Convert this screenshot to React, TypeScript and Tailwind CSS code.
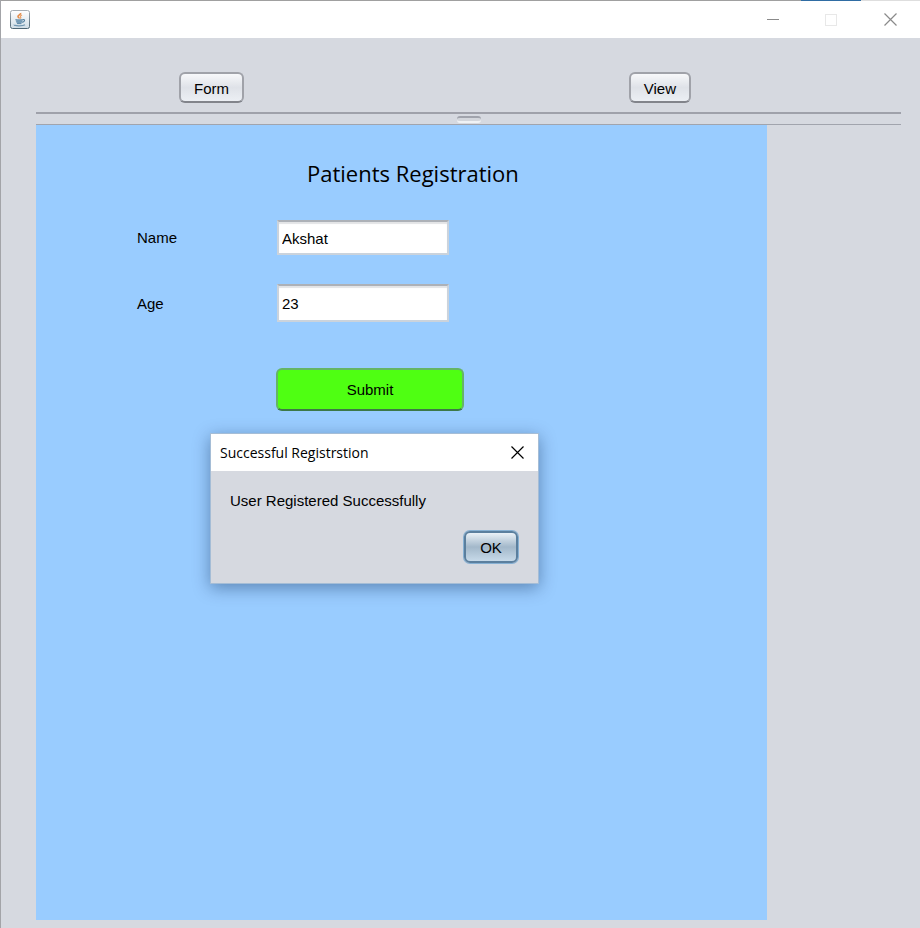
import { useState } from "react";

function JavaIcon() {
  return (
    <svg width="20" height="20" viewBox="0 0 20 20" aria-hidden="true">
      <defs>
        <linearGradient id="tile" x1="0" y1="0" x2="0" y2="1">
          <stop offset="0" stopColor="#ffffff" />
          <stop offset="1" stopColor="#cfdde6" />
        </linearGradient>
        <linearGradient id="edge" x1="0" y1="0" x2="0" y2="1">
          <stop offset="0" stopColor="#a5adb3" />
          <stop offset="1" stopColor="#4d6675" />
        </linearGradient>
      </defs>
      <rect x="0.5" y="0.5" width="19" height="18" rx="2" fill="url(#tile)" stroke="url(#edge)" />
      <path d="M10.6 3c.7 1.6-3.1 2.1-2.6 3.7.2.7 1.2 1 1.3 1.8" fill="none" stroke="#e58a45" strokeWidth="1.6" />
      <path d="M12 5c-1.7.7-2 1.3-1.3 2.1.4.5 0 1-.5 1.4" fill="none" stroke="#e9a068" strokeWidth="1.2" />
      <path d="M5.6 9.4h7.2c0 2.2-1 3.8-1.9 4.2H7.4c-.9-.4-1.8-2-1.8-4.2z" fill="#8fb0c8" />
      <path d="M5.5 9.6c1.8.6 5.4.6 7.2 0M6.6 11.7c1.4.5 3.9.5 5.1 0M7 13.6h4.4" fill="none" stroke="#54809f" strokeWidth="0.9" />
      <path d="M12.8 9.6c2.6-.4 2.2 2-.6 2.8" fill="none" stroke="#54809f" strokeWidth="1.1" />
      <path d="M4.4 14.7c-1.2 1.3 8.6 1.6 10.6.1" fill="none" stroke="#6f96b1" strokeWidth="1.3" />
    </svg>
  );
}

function Cross() {
  return (
    <svg width="13" height="13" viewBox="0 0 13 13" aria-hidden="true">
      <path d="M.5.5l12 12M12.5.5l-12 12" stroke="currentColor" strokeWidth="1.2" fill="none" />
    </svg>
  );
}

function ToolButton({ children }: { children: string }) {
  return (
    <button
      type="button"
      className="h-[31px] rounded-md border-2 border-[#a0a2a9] border-b-[#82848b] bg-linear-to-b from-[#f7f8fa] via-[#dfe2e8] to-[#eceff4] px-[13px] pt-0.5 leading-4"
    >
      {children}
    </button>
  );
}

const fieldStyle =
  "w-[172px] border-2 border-[#cbd3dc] border-t-[#adb1b7] bg-white px-[3px] shadow-[inset_0_2px_1px_#e3e4e6] outline-none";

export default function App() {
  const [name, setName] = useState("Akshat");
  const [age, setAge] = useState("23");

  return (
    <div className="flex min-h-screen flex-col border-l border-[#a3a4a8] bg-[#d6d9e0] font-['Liberation_Sans',Arial,sans-serif] text-[15px] text-black">
      <div className="flex h-px bg-[#a0a0a0]">
        <div className="ml-auto w-[60px] bg-[#2f6ca3]" />
        <div className="w-[59px] bg-[#dedede]" />
      </div>
      <header className="flex h-[37px] items-center justify-between bg-white pl-[9px] text-[#8a8a8a]">
        <JavaIcon />
        <div className="flex h-full">
          <button type="button" aria-label="Minimize" className="grid w-[58px] place-items-center">
            <span className="h-px w-3 bg-current" />
          </button>
          <button type="button" aria-label="Maximize" disabled className="grid w-[58px] place-items-center">
            <span className="size-3 border border-[#e8e8e8]" />
          </button>
          <button type="button" aria-label="Close" className="grid w-[60px] place-items-center">
            <Cross />
          </button>
        </div>
      </header>

      <main className="flex flex-1 flex-col pt-[34px] pr-[19px] pb-2 pl-[35px]">
        <nav className="flex justify-between pr-[210px] pb-[9px] pl-[143px]">
          <ToolButton>Form</ToolButton>
          <ToolButton>View</ToolButton>
        </nav>

        <div className="flex h-[13px] justify-center border-t-2 border-b border-t-[#9fa1aa] border-b-[#a1a4ad] pt-[2px]">
          <div className="h-[7px] w-6 rounded-[3px] border-t-2 border-b-2 border-t-[#a0a3ac] border-b-[#f0f2f5] bg-[#d3d6dc]" />
        </div>

        <section className="relative mr-[134px] flex-1 bg-[#99ccff] pt-8 pl-[101px]">
          <h1 className="pl-[170px] font-['Open_Sans','Segoe_UI',sans-serif] text-[22px] leading-8">
            Patients Registration
          </h1>
          <form className="pt-[31px]" onSubmit={(event) => event.preventDefault()}>
            <div className="grid grid-cols-[140px_auto] items-center justify-start gap-y-[29px]">
              <label htmlFor="name" className="pt-0.5">Name</label>
              <input
                id="name"
                value={name}
                onChange={(event) => setName(event.target.value)}
                className={`h-[35px] pt-0.5 ${fieldStyle}`}
              />
              <label htmlFor="age" className="pt-0.5">Age</label>
              <input
                id="age"
                value={age}
                onChange={(event) => setAge(event.target.value)}
                className={`h-[38px] ${fieldStyle}`}
              />
            </div>
            <button
              type="submit"
              className="mt-[46px] ml-[139px] h-[43px] w-[188px] rounded-md border-2 border-[#65b565] border-b-[#3d7948] bg-[#4fff12] pt-0.5"
            >
              Submit
            </button>
          </form>

          <div
            role="dialog"
            aria-labelledby="dialog-title"
            className="absolute top-[308px] left-[174px] w-[329px] border border-[#a5bdd6] bg-[#d6d9e0] shadow-[0_4px_16px_rgba(0,30,70,0.4)]"
          >
            <div className="flex h-[37px] items-center justify-between bg-white pr-3.5 pl-[9px]">
              <h2 id="dialog-title" className="font-['Open_Sans','Segoe_UI',sans-serif] text-[14px]">
                Successful Registrstion
              </h2>
              <button type="button" aria-label="Close dialog">
                <Cross />
              </button>
            </div>
            <div className="flex flex-col pt-5 pr-5 pb-5 pl-[19px]">
              <p className="leading-5">User Registered Successfully</p>
              <button
                type="button"
                className="mt-5 h-8 w-[54px] self-end rounded-md border-2 border-[#5b7f9e] bg-linear-to-b from-[#eaf1f7] via-[#a3b8ca] to-[#c7dae9] pt-0.5 shadow-[0_0_0_1px_#86b0d3]"
              >
                OK
              </button>
            </div>
          </div>
        </section>
      </main>
    </div>
  );
}
